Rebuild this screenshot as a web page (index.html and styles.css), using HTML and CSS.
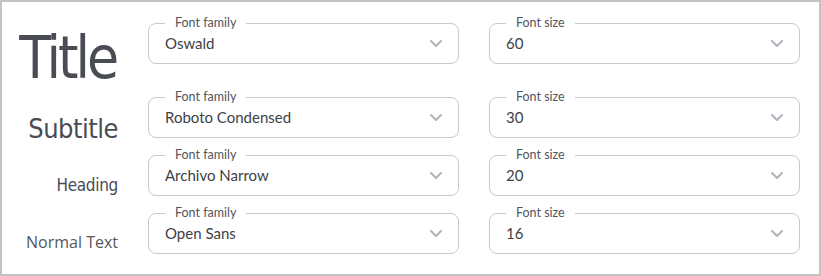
FILE: index.html
```html
<!DOCTYPE html>
<html lang="en">

<head>
    <meta charset="utf-8">
    <title>Typography settings</title>
    <link rel="stylesheet" href="styles.css">
</head>

<body>
<div class="panel">
    <div class="row row-title">
        <div class="style-name name-title">Title</div>
        <div class="field">
            <span class="field-label">Font family</span>
            <span class="field-value">Oswald</span>
            <svg class="chevron" width="12" height="7" viewBox="0 0 12 7"><path d="M1 1l5 5 5-5"/></svg>
        </div>
        <div class="field">
            <span class="field-label">Font size</span>
            <span class="field-value">60</span>
            <svg class="chevron" width="12" height="7" viewBox="0 0 12 7"><path d="M1 1l5 5 5-5"/></svg>
        </div>
    </div>
    <div class="row">
        <div class="style-name name-subtitle">Subtitle</div>
        <div class="field">
            <span class="field-label">Font family</span>
            <span class="field-value">Roboto Condensed</span>
            <svg class="chevron" width="12" height="7" viewBox="0 0 12 7"><path d="M1 1l5 5 5-5"/></svg>
        </div>
        <div class="field">
            <span class="field-label">Font size</span>
            <span class="field-value">30</span>
            <svg class="chevron" width="12" height="7" viewBox="0 0 12 7"><path d="M1 1l5 5 5-5"/></svg>
        </div>
    </div>
    <div class="row">
        <div class="style-name name-heading">Heading</div>
        <div class="field">
            <span class="field-label">Font family</span>
            <span class="field-value">Archivo Narrow</span>
            <svg class="chevron" width="12" height="7" viewBox="0 0 12 7"><path d="M1 1l5 5 5-5"/></svg>
        </div>
        <div class="field">
            <span class="field-label">Font size</span>
            <span class="field-value">20</span>
            <svg class="chevron" width="12" height="7" viewBox="0 0 12 7"><path d="M1 1l5 5 5-5"/></svg>
        </div>
    </div>
    <div class="row">
        <div class="style-name name-text">Normal Text</div>
        <div class="field">
            <span class="field-label">Font family</span>
            <span class="field-value">Open Sans</span>
            <svg class="chevron" width="12" height="7" viewBox="0 0 12 7"><path d="M1 1l5 5 5-5"/></svg>
        </div>
        <div class="field">
            <span class="field-label">Font size</span>
            <span class="field-value">16</span>
            <svg class="chevron" width="12" height="7" viewBox="0 0 12 7"><path d="M1 1l5 5 5-5"/></svg>
        </div>
    </div>
</div>
</body>

</html>
```

FILE: styles.css
```css
body {
    margin: 0;
    background: #ffffff;
    font-family: Lato, "Noto Sans", sans-serif;
}

.panel {
    box-sizing: border-box;
    width: 821px;
    height: 276px;
    border: 2px solid #c3c3c3;
    padding-top: 21px;
    display: flex;
    flex-direction: column;
    gap: 17px;
}

.row {
    display: grid;
    grid-template-columns: 116px 311px 311px;
    column-gap: 30px;
    align-items: start;
    height: 41px;
}

.row-title {
    margin-bottom: 16px;
}

.style-name {
    text-align: right;
    white-space: nowrap;
    color: #4a4c54;
    font-family: "DejaVu Sans Condensed", "Liberation Sans Narrow", sans-serif;
}

.name-title {
    font-size: 58px;
    line-height: 70px;
    letter-spacing: -3px;
    padding-right: 2px;
}

.name-subtitle {
    font-size: 27px;
    line-height: 63px;
    letter-spacing: -0.5px;
}

.name-heading {
    font-size: 17px;
    line-height: 61px;
    letter-spacing: -0.3px;
}

.name-text {
    font-family: "Open Sans", sans-serif;
    font-size: 16px;
    line-height: 58px;
    color: #55575e;
}

.field {
    position: relative;
    box-sizing: border-box;
    height: 41px;
    border: 1px solid #c6c9cf;
    border-radius: 8px;
    padding: 0 16px;
    display: flex;
    align-items: center;
    justify-content: space-between;
}

.field-label {
    position: absolute;
    top: -9px;
    left: 16px;
    padding: 0 10px;
    background: #ffffff;
    font-size: 12.5px;
    line-height: 16px;
    color: #52565d;
}

.field-value {
    font-size: 15px;
    line-height: 39px;
    color: #3d3f45;
}

.chevron {
    fill: none;
    stroke: #b3b7be;
    stroke-width: 2.2;
    stroke-linecap: round;
    stroke-linejoin: round;
}
```
